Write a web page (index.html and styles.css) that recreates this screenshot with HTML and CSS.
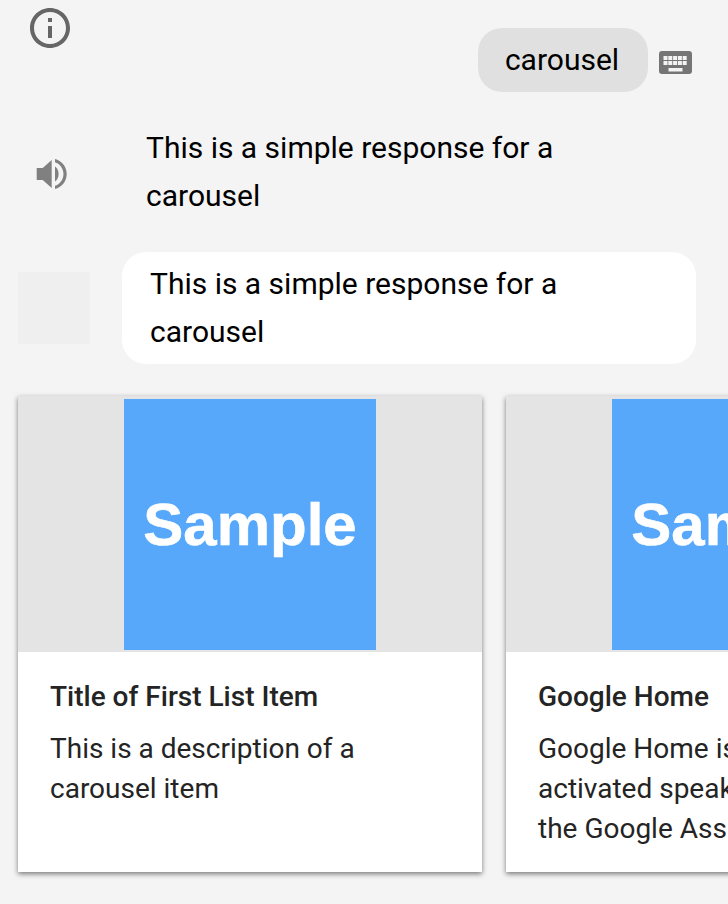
FILE: index.html
```html
<!DOCTYPE html>
<html lang="en">
<head>
<meta charset="utf-8">
<title>Carousel</title>
<link rel="stylesheet" href="styles.css">
</head>
<body>
<main class="chat">
  <svg class="info-icon" viewBox="0 0 48 48" width="48" height="48" aria-hidden="true"><path d="M22 34h4V22h-4v12zM24 4C12.95 4 4 12.95 4 24s8.95 20 20 20 20-8.95 20-20S35.05 4 24 4zm0 36c-8.82 0-16-7.18-16-16S15.18 8 24 8s16 7.18 16 16-7.18 16-16 16zm-2-22h4v-4h-4v4z"/></svg>

  <div class="user-row">
    <div class="user-pill">carousel</div>
    <svg class="keyboard-icon" viewBox="0 0 33 23" width="33" height="23" aria-hidden="true">
      <path class="kb-body" fill-rule="evenodd" d="M3 0h27a3 3 0 0 1 3 3v17a3 3 0 0 1-3 3H3a3 3 0 0 1-3-3V3a3 3 0 0 1 3-3zM4.500 5v4h4V5zM9.300 5v4h4V5zM14.100 5v4h4V5zM18.900 5v4h4V5zM23.700 5v4h4V5zM4.500 10v4h4v-4zM9.300 10v4h4v-4zM14.100 10v4h4v-4zM18.900 10v4h4v-4zM23.700 10v4h4v-4zM9.500 17v3.400h14V17z"/>
    </svg>
  </div>

  <div class="spoken-row">
    <svg class="speaker-icon" viewBox="0 0 31 30" width="31" height="30" aria-hidden="true"><path d="M.7 9h6l9-8v28l-9-8h-6zM19 7.500c2.200 1.300 3.600 4 3.600 7.500s-1.400 6.200-3.600 7.500zM19 0c6.500 1.500 11.700 7.500 11.700 15S25.500 28.500 19 30v-3.200c4.500-1.400 8.500-6 8.500-11.800S23.500 4.600 19 3.200z"/></svg>
    <p class="spoken-text">This is a simple response for a carousel</p>
  </div>

  <div class="bubble-row">
    <div class="avatar"></div>
    <p class="bubble">This is a simple response for a carousel</p>
  </div>

  <div class="carousel">
    <article class="card">
      <div class="card-media"><div class="sample"><span class="sample-text">Sample</span></div></div>
      <div class="card-body">
        <h2 class="card-title">Title of First List Item</h2>
        <p class="card-desc">This is a description of a carousel item</p>
      </div>
    </article>
    <article class="card">
      <div class="card-media"><div class="sample"><span class="sample-text">Sample</span></div></div>
      <div class="card-body">
        <h2 class="card-title">Google Home</h2>
        <p class="card-desc">Google Home is a voice-activated speaker powered by the Google Assistant.</p>
      </div>
    </article>
  </div>
</main>
</body>
</html>
```

FILE: styles.css
```css
* { box-sizing: border-box; }
html, body { margin: 0; height: 100%; }
body {
  background: #f4f4f4;
  font-family: Roboto, "Liberation Sans", sans-serif;
  color: #000;
  overflow: hidden;
}
.chat { position: relative; width: 728px; height: 904px; overflow: hidden; padding-top: 28px; }
.info-icon { position: absolute; left: 26px; top: 4px; fill: #666; }

.user-row { display: flex; justify-content: flex-end; align-items: center; gap: 11px; padding-right: 36px; }
.user-pill {
  height: 64px; width: 170px; padding-right: 2px; border-radius: 24px; background: #e0e0e0;
  font-size: 30px; line-height: 64px; text-align: center;
}
.keyboard-icon { margin-top: 4px; }
.kb-body { fill: #757575; }

.spoken-row { display: flex; align-items: center; margin-top: 32px; padding-left: 36px; }
.speaker-icon { fill: #808080; flex: none; margin-top: 4px; }
.spoken-text { margin: 0 0 0 79px; width: 450px; font-size: 30px; line-height: 48px; }

.bubble-row { display: flex; align-items: center; gap: 32px; margin-top: 32px; padding-left: 18px; }
.avatar { width: 72px; height: 72px; background: #efefef; flex: none; }
.bubble {
  margin: 0; width: 574px; padding: 8px 28px; background: #fff; border-radius: 24px;
  font-size: 30px; line-height: 48px;
}

.carousel { display: flex; gap: 24px; margin-top: 32px; padding-left: 18px; }
.card {
  flex: none; width: 464px; height: 476px; background: #fff;
  box-shadow: 0 2px 5px rgba(0, 0, 0, .5);
}
.card-media { height: 256px; background: #e4e4e4; display: flex; justify-content: center; padding-top: 3px; }
.sample {
  width: 252px; height: 251px; background: #57a8fa;
  display: flex; align-items: center; justify-content: center;
  filter: blur(.7px);
}
.sample-text { font-family: "Liberation Sans", Arial, sans-serif; font-weight: 700; font-size: 60px; color: #fff; -webkit-text-stroke: .6px #fff; }
.card-body { padding: 24px 32px; color: #242424; }
.card-title { margin: 0; font-size: 28px; font-weight: 500; line-height: 42px; }
.card-desc { margin: 11px 0 0; font-size: 28px; line-height: 40px; }
```
